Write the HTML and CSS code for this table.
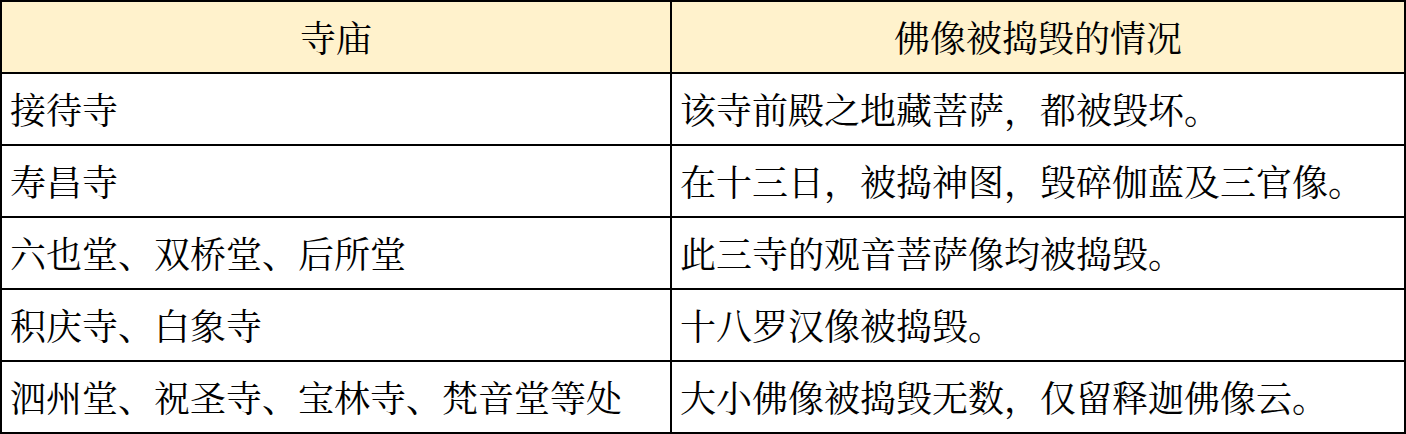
FILE: index.html
```html
<!DOCTYPE html>
<html lang="zh-CN">
<head>
<meta charset="utf-8">
<link rel="stylesheet" href="styles.css">
</head>
<body>
<table class="tbl">
  <colgroup><col class="c1"><col class="c2"></colgroup>
  <thead>
    <tr><th>寺庙</th><th>佛像被捣毁的情况</th></tr>
  </thead>
  <tbody>
    <tr><td>接待寺</td><td>该寺前殿之地藏菩萨，都被毁坏。</td></tr>
    <tr><td>寿昌寺</td><td>在十三日，被捣神图，毁碎伽蓝及三官像。</td></tr>
    <tr><td>六也堂、双桥堂、后所堂</td><td>此三寺的观音菩萨像均被捣毁。</td></tr>
    <tr><td>积庆寺、白象寺</td><td>十八罗汉像被捣毁。</td></tr>
    <tr><td>泗州堂、祝圣寺、宝林寺、梵音堂等处</td><td>大小佛像被捣毁无数，仅留释迦佛像云。</td></tr>
  </tbody>
</table>
</body>
</html>
```
FILE: styles.css
```css
html, body {
  margin: 0;
  padding: 0;
  background: #ffffff;
}
.tbl {
  width: 1406px;
  border-collapse: collapse;
  table-layout: fixed;
  font-family: "Noto Serif CJK SC", "Noto Sans CJK SC", sans-serif;
  font-size: 36px;
  color: #000;
}
.c1 { width: 670px; }
.tbl th, .tbl td {
  border: 2px solid #000;
  height: 72px;
  padding: 0 8px;
  box-sizing: border-box;
  line-height: 1;
  white-space: nowrap;
  vertical-align: middle;
}
.tbl th {
  background: #fff2cc;
  font-weight: normal;
  text-align: center;
}
.tbl td {
  text-align: left;
}
```
